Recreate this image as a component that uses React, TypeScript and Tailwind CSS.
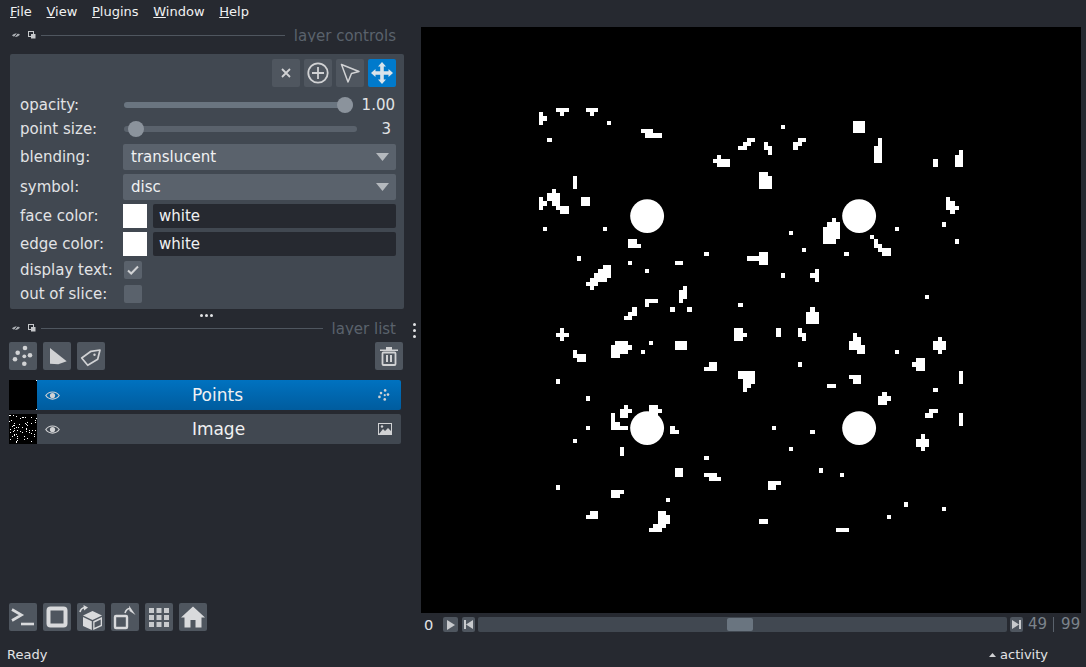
import React from 'react';

// white pixel runs of the binary image: [col, row, width, height]
const blobs: number[][] = [
  [0,1,1,3],[1,2,1,1],[4,0,3,1],[5,1,1,1],[11,0,3,1],[12,1,1,1],[16,3,1,1],[2,7,1,1],
  [24,5,3,1],[25,6,4,1],[49,7,2,1],[48,8,2,1],[47,9,2,1],[42,11,1,1],[41,12,4,1],[42,13,3,1],
  [8,16,1,3],[0,21,1,3],[1,22,1,1],[3,19,1,1],[2,20,3,2],[3,22,2,1],[4,23,3,1],[5,24,2,1],
  [10,21,2,2],[1,28,1,1],[15,28,1,1],[21,31,2,2],[23,32,1,1],[9,35,1,1],[21,36,1,1],[25,38,1,1],
  [32,36,2,1],[39,34,1,1],[49,35,3,1],[52,34,2,3],[15,37,2,1],[14,38,3,1],[13,39,4,1],[12,40,4,1],
  [11,41,3,1],[12,42,1,1],[33,43,1,3],[34,42,1,3],[25,45,3,1],[25,46,1,1],[31,47,1,1],[35,47,1,1],
  [47,46,1,1],[22,47,1,2],[21,48,1,1],[20,49,2,1],
  [57,4,1,1],[74,3,3,3],[53,8,1,2],[54,9,1,2],[61,7,2,1],[60,8,2,1],[60,9,1,1],[80,7,1,2],[79,9,2,4],
  [93,12,1,2],[99,10,1,1],[98,11,2,3],[52,15,2,1],[52,16,3,3],[96,21,1,3],[97,22,1,3],[98,23,1,1],
  [95,27,1,1],[98,31,1,1],[84,28,1,1],[59,29,1,1],[69,26,1,1],[68,27,3,1],[67,28,4,3],[67,31,3,1],
  [78,30,1,1],[79,31,1,2],[80,32,1,2],[81,33,2,2],[62,33,1,1],[72,34,1,1],[57,39,1,1],[65,38,1,3],
  [64,39,1,1],[91,44,1,1],[64,47,1,1],[63,48,3,3],
  [5,52,1,3],[4,53,3,1],[46,52,2,3],[48,53,1,1],[18,55,3,1],[17,56,5,1],[17,57,4,1],[17,58,2,1],
  [26,55,1,1],[24,57,1,1],[32,55,3,2],[8,57,1,2],[9,58,2,2],[40,60,2,1],[39,61,3,1],[47,62,4,2],
  [48,64,3,1],[48,65,2,1],[48,66,1,1],[4,64,1,1],[11,68,1,1],[20,70,1,1],[19,71,3,1],[19,72,2,1],
  [26,70,2,1],[26,71,3,1],[26,72,2,2],[17,72,1,3],[18,74,1,2],[19,75,2,1],[17,75,2,1],[11,75,1,1],[8,78,1,1],
  [31,75,1,2],[32,76,1,1],[19,80,1,2],[39,82,1,1],[32,85,2,2],[39,86,3,1],[40,87,3,1],[4,89,1,1],
  [17,90,3,1],[17,91,2,1],[30,92,1,1],[12,95,2,1],[11,96,3,1],[28,95,2,1],[28,96,3,2],[27,98,3,1],[26,99,3,1],
  [56,52,1,2],[61,52,1,2],[62,53,1,2],[74,53,1,1],[74,54,2,1],[73,55,3,1],[73,56,4,1],[75,57,2,1],
  [94,54,1,1],[93,55,3,2],[94,57,1,1],[84,57,1,1],[89,59,2,3],[88,60,1,1],[61,60,1,1],[99,62,1,3],
  [73,63,3,1],[74,64,2,1],[68,65,2,1],[93,66,1,1],[81,67,1,1],[80,68,3,1],[80,69,2,1],[92,71,2,1],
  [91,72,2,1],[99,72,1,3],[90,77,1,1],[89,78,3,2],[90,80,1,1],[55,75,1,1],[64,76,1,1],[59,80,1,1],
  [66,85,1,1],[71,86,1,1],[54,88,3,1],[54,89,2,1],[86,93,1,1],[95,94,1,1],[82,96,1,1],[52,97,2,1],[70,99,3,1],
];

function IconButton({ active, children }: { active?: boolean; children: React.ReactNode }) {
  return (
    <div className={`w-7 h-7 rounded-[2px] flex items-center justify-center shrink-0 ${active ? 'bg-[#007acc]' : 'bg-[#4f565f]'}`}>
      {children}
    </div>
  );
}

function DockHeader({ title, lineWidth }: { title: string; lineWidth: string }) {
  return (
    <div className="flex items-center h-4 pl-[11px] pr-[25px]">
      <svg width="10" height="8" viewBox="0 0 10 8" className="shrink-0 mr-[7px]">
        <path d="M1 4.500C3 2 7 2 9 3.500 7 6.500 3 6.500 1 4.500Z" fill="#a8acb1" />
        <path d="M3 6.500L7 1.500" stroke="#262930" strokeWidth="1" />
      </svg>
      <svg width="8" height="8" viewBox="0 0 8 8" className="shrink-0 mr-[5px]">
        <rect x="0.500" y="0.500" width="5" height="5" fill="none" stroke="#c5c7ca" />
        <rect x="3" y="3" width="4.500" height="4.500" fill="#c5c7ca" />
      </svg>
      <div className={`h-px bg-[#4f565f] ${lineWidth}`} />
      <span className="ml-auto self-start text-[15px] leading-[17px] h-[15px] pt-px overflow-hidden text-[#5a626c]">{title}</span>
    </div>
  );
}

function Combo({ value }: { value: string }) {
  return (
    <div className="flex-1 h-[26px] rounded-[2px] bg-[#5a626c] flex items-center pl-2 pr-[7px] justify-between">
      <span className="text-[15px] text-[#f0f1f2]">{value}</span>
      <svg width="13" height="8" viewBox="0 0 13 8"><path d="M0 0H13L6.500 8Z" fill="#b4b8bd" /></svg>
    </div>
  );
}

function ColorRow({ label }: { label: string }) {
  return (
    <div className="flex items-center h-6 mt-1 -mr-[2px]">
      <span className="w-[103px] text-[15px] text-[#e2e3e5]">{label}</span>
      <div className="w-6 h-6 bg-white shrink-0" />
      <div className="ml-[6px] flex-1 h-6 rounded-[2px] bg-[#262930] pl-[6px] flex items-center text-[15px] text-[#f0f1f2]">white</div>
    </div>
  );
}

function Eye() {
  return (
    <svg width="15" height="11" viewBox="0 0 15 11">
      <path d="M0.800 5.500C4 0.800 11 0.800 14.200 5.500 11 10.200 4 10.200 0.800 5.500Z" fill="none" stroke="#d1d2d4" strokeWidth="1.200" />
      <circle cx="7.500" cy="5.500" r="2.600" fill="#d1d2d4" />
    </svg>
  );
}

function PointsGlyph({ size }: { size: number }) {
  return (
    <svg width={size} height={size} viewBox="0 0 28 28">
      {[[16, 6, 2.300], [8.700, 10.700, 2.300], [21, 13.300, 2.300], [15.300, 14.300, 1.900], [6, 17.300, 2.300], [15.300, 21.700, 2.300]].map(([cx, cy, r]) => (
        <circle key={`${cx}-${cy}`} cx={cx} cy={cy} r={r} fill="#d1d2d4" />
      ))}
    </svg>
  );
}

function LayerRow({ name, selected, thumb, icon, className }: { name: string; selected?: boolean; thumb: React.ReactNode; icon: React.ReactNode; className?: string }) {
  return (
    <div className={`flex h-[30px] mx-[9px] w-[392px] ${className ?? ''}`}>
      <div className="w-7 h-[30px] bg-black shrink-0">{thumb}</div>
      <div className={`flex-1 flex items-center pl-2 pr-[9px] rounded-r-[2px] ${selected ? 'bg-linear-to-b from-[#0072c0] to-[#005c9e]' : 'bg-[#414851]'}`}>
        <Eye />
        <span className="flex-1 text-center text-[17px] text-[#f0f1f2] pr-px pt-[2px]">{name}</span>
        {icon}
      </div>
    </div>
  );
}

function StepIcon({ flip }: { flip?: boolean }) {
  return (
    <svg width="9" height="9" viewBox="0 0 9 9" className={flip ? '-scale-x-100' : ''}>
      <path d="M0 0H2V9H0ZM9 0V9L2 4.500Z" fill="#c8cacd" />
    </svg>
  );
}

export default function App() {
  return (
    <div className="w-[1086px] h-[667px] flex flex-col bg-[#262930] text-[#f0f1f2] overflow-hidden font-['DejaVu_Sans',sans-serif]">
      {/* Menu bar */}
      <div className="h-[24px] flex items-center pl-[10px] gap-[14.7px] text-[13px] shrink-0">
        <span><span className="underline">F</span>ile</span>
        <span><span className="underline">V</span>iew</span>
        <span><span className="underline">P</span>lugins</span>
        <span><span className="underline">W</span>indow</span>
        <span><span className="underline">H</span>elp</span>
      </div>

      <div className="flex flex-1 min-h-0">
        {/* Left docks */}
        <div className="w-[421px] shrink-0 flex flex-col pt-[3px]">
          <div className="h-[27px] shrink-0">
            <DockHeader title="layer controls" lineWidth="w-[244px]" />
          </div>

          {/* Layer controls */}
          <div className="mx-[10px] w-[394px] h-[255px] rounded-[2px] bg-[#414851] px-[10px] pt-[5px] flex flex-col shrink-0">
            <div className="flex justify-end gap-1 -mr-[2px]">
              <IconButton>
                <svg width="10" height="10" viewBox="0 0 10 10"><path d="M1 1L9 9M9 1L1 9" stroke="#d1d2d4" strokeWidth="1.800" /></svg>
              </IconButton>
              <IconButton>
                <svg width="24" height="24" viewBox="0 0 24 24"><circle cx="12" cy="12" r="9.700" fill="none" stroke="#d1d2d4" strokeWidth="1.800" /><path d="M12 6V18M6 12H18" stroke="#d1d2d4" strokeWidth="1.800" /></svg>
              </IconButton>
              <IconButton>
                <svg width="22" height="22" viewBox="0 0 22 22"><path d="M2.500 2.500L20 9.500 12.500 11.500 9 20Z" fill="none" stroke="#d1d2d4" strokeWidth="1.500" strokeLinejoin="round" /></svg>
              </IconButton>
              <IconButton active>
                <svg width="24" height="24" viewBox="0 0 24 24"><path d="M12 1L16 5.500H13.800V10.200H18.500V8L23 12 18.500 16V13.800H13.800V18.500H16L12 23 8 18.500H10.200V13.800H5.500V16L1 12 5.500 8V10.200H10.200V5.500H8Z" fill="#d9e3ea" /></svg>
              </IconButton>
            </div>

            <div className="flex items-center h-6 mt-[6px]">
              <span className="w-[104px] text-[15px] text-[#e2e3e5] pt-px">opacity:</span>
              <div className="relative w-[229px] h-[6px] rounded-[3px] bg-[#6a7580]">
                <div className="absolute -top-[5px] left-[213px] w-4 h-4 rounded-full bg-[#8b939c]" />
              </div>
              <span className="flex-1 text-right text-[15px] text-[#e2e3e5] -mr-px pt-px">1.00</span>
            </div>
            <div className="flex items-center h-6">
              <span className="w-[104px] text-[15px] text-[#e2e3e5]">point size:</span>
              <div className="relative w-[233px] h-[6px] rounded-[3px] bg-[#5a626c]">
                <div className="absolute -top-[5px] left-[4px] w-4 h-4 rounded-full bg-[#8b939c]" />
              </div>
              <span className="flex-1 text-right text-[15px] text-[#e2e3e5] pr-[3px]">3</span>
            </div>

            <div className="flex items-center mt-[3px] -mr-[2px]">
              <span className="w-[103px] text-[15px] text-[#e2e3e5]">blending:</span>
              <Combo value="translucent" />
            </div>
            <div className="flex items-center mt-1 -mr-[2px]">
              <span className="w-[103px] text-[15px] text-[#e2e3e5]">symbol:</span>
              <Combo value="disc" />
            </div>
            <ColorRow label="face color:" />
            <ColorRow label="edge color:" />
            <div className="flex items-center h-[18px] mt-[5px]">
              <span className="w-[104px] text-[15px] text-[#e2e3e5]">display text:</span>
              <div className="w-[18px] h-[18px] rounded-[2px] bg-[#5a626c] flex items-center justify-center">
                <svg width="12" height="10" viewBox="0 0 12 10"><path d="M1 5.500L4.200 8.500 11 1.500" fill="none" stroke="#d1d2d4" strokeWidth="2" /></svg>
              </div>
            </div>
            <div className="flex items-center h-[18px] mt-[6px]">
              <span className="w-[104px] text-[15px] text-[#e2e3e5]">out of slice:</span>
              <div className="w-[18px] h-[18px] rounded-[2px] bg-[#5a626c]" />
            </div>
          </div>

          {/* Splitter handle */}
          <div className="h-[11px] flex items-center justify-center gap-[2px] pr-[9px] pt-px shrink-0">
            <span className="w-[3px] h-[3px] bg-[#e2e3e5] rounded-full" />
            <span className="w-[3px] h-[3px] bg-[#e2e3e5] rounded-full" />
            <span className="w-[3px] h-[3px] bg-[#e2e3e5] rounded-full" />
          </div>

          {/* Layer list */}
          <div className="relative h-[16px] shrink-0">
            <DockHeader title="layer list" lineWidth="w-[282px]" />
            <div className="absolute right-[5px] top-[3px] flex flex-col gap-[3px]">
              <span className="w-[3px] h-[3px] bg-[#e2e3e5] rounded-full" />
              <span className="w-[3px] h-[3px] bg-[#e2e3e5] rounded-full" />
              <span className="w-[3px] h-[3px] bg-[#e2e3e5] rounded-full" />
            </div>
          </div>

          <div className="flex gap-[6px] px-[9px] w-[412px] mt-[6px] shrink-0">
            <IconButton><PointsGlyph size={28} /></IconButton>
            <IconButton>
              <svg width="28" height="28" viewBox="0 0 28 28"><path d="M7 6L23.700 19.300 15.300 22.300 7 21.700Z" fill="#d1d2d4" /></svg>
            </IconButton>
            <IconButton>
              <svg width="28" height="28" viewBox="0 0 28 28"><path d="M4.700 16L14 9.300 23 8 20.700 17.300 10.700 23.300Z" fill="none" stroke="#d1d2d4" strokeWidth="1.700" strokeLinejoin="round" /><circle cx="17.500" cy="12.700" r="1.200" fill="#d1d2d4" /></svg>
            </IconButton>
            <div className="ml-auto">
              <IconButton>
                <svg width="20" height="20" viewBox="0 0 20 20"><path d="M1 3.500H19V5H1ZM7 1H13V3.500H7Z" fill="#d1d2d4" /><rect x="3.500" y="6.500" width="13" height="12.500" rx="1" fill="none" stroke="#d1d2d4" strokeWidth="1.800" /><path d="M7 9H9V16H7ZM11 9H13V16H11Z" fill="#d1d2d4" /></svg>
              </IconButton>
            </div>
          </div>

          <LayerRow
            name="Points"
            selected
            className="mt-[10px]"
            thumb={<div className="w-7 h-[30px] flex flex-col justify-between items-end"><div className="w-px h-px bg-white" /><div className="w-px h-px bg-white" /></div>}
            icon={<PointsGlyph size={16} />}
          />
          <LayerRow
            name="Image"
            className="mt-1"
            thumb={
              <svg width="28" height="28" viewBox="0 0 28 28" shapeRendering="crispEdges" className="mt-px">
                {blobs.filter((_, i) => i % 3 === 0).map(([x, y], i) => (
                  <rect key={i} x={Math.floor(x * 0.28)} y={Math.floor(y * 0.28)} width="1" height="1" fill="#fff" />
                ))}
              </svg>
            }
            icon={
              <svg width="14" height="12" viewBox="0 0 14 12">
                <rect x="0.500" y="0.500" width="13" height="11" fill="none" stroke="#d1d2d4" />
                <path d="M1 11L5 6 7 8 10 5 13 8V11Z" fill="#d1d2d4" />
                <circle cx="4" cy="3.500" r="1.200" fill="#d1d2d4" />
              </svg>
            }
          />

          {/* Viewer buttons */}
          <div className="flex gap-[6px] px-[9px] mt-auto mb-[11px] shrink-0">
            <IconButton>
              <svg width="24" height="20" viewBox="0 0 24 20"><path d="M1 2.500L10.500 8 1 13.500" fill="none" stroke="#d9dadc" strokeWidth="2.600" /><path d="M10 17H23" stroke="#d9dadc" strokeWidth="2.600" /></svg>
            </IconButton>
            <IconButton>
              <svg width="22" height="22" viewBox="0 0 22 22"><rect x="2.500" y="2.500" width="17" height="17" rx="2" fill="none" stroke="#d9dadc" strokeWidth="4" /></svg>
            </IconButton>
            <IconButton>
              <svg width="28" height="28" viewBox="0 0 28 28">
                <path d="M15.500 8L25 12.500 15.500 17 6 12.500Z" fill="#d9dadc" />
                <path d="M6 14L14.800 18.300V27L6 23Z" fill="#d9dadc" />
                <path d="M16.200 18.300L25 14V23L16.200 27ZM17.500 19.500V24.800L23.700 22V16.500Z" fill="#d9dadc" fillRule="evenodd" />
                <path d="M3 9C3.500 6.500 5 5 7.500 4.500" fill="none" stroke="#d9dadc" strokeWidth="1.600" />
                <path d="M6.500 2L11 4.500 7 7.500Z" fill="#d9dadc" />
              </svg>
            </IconButton>
            <IconButton>
              <svg width="28" height="28" viewBox="0 0 28 28">
                <rect x="4" y="13" width="12" height="12" rx="1" fill="none" stroke="#d9dadc" strokeWidth="2.400" />
                <path d="M14 10C15 7 17 5.500 19 5.500" fill="none" stroke="#d9dadc" strokeWidth="1.600" />
                <path d="M18 2.500L24.500 12 18.500 8Z" fill="#d9dadc" />
              </svg>
            </IconButton>
            <IconButton>
              <svg width="22" height="21" viewBox="0 0 22 21">
                <path d="M1 1H6V6H1ZM8.500 1H13.500V6H8.500ZM16 1H21V6H16ZM1 8H6V13H1ZM8.500 8H13.500V13H8.500ZM16 8H21V13H16ZM1 15H6V20H1ZM8.500 15H13.500V20H8.500ZM16 15H21V20H16Z" fill="#c8cacd" />
              </svg>
            </IconButton>
            <IconButton>
              <svg width="24" height="22" viewBox="0 0 24 22"><path d="M12 0.500L24 11.500H20.500V21.500H14.500V14H9.500V21.500H3.500V11.500H0Z" fill="#d9dadc" /></svg>
            </IconButton>
          </div>
        </div>

        {/* Canvas and dims slider */}
        <div className="flex-1 flex flex-col pt-[3px] pr-[5px] min-w-0">
          <div className="h-[586px] bg-black flex items-center justify-center shrink-0">
            <svg width="424" height="424" viewBox="0 0 100 100" className="overflow-visible">
              <g shapeRendering="crispEdges" fill="#fff">
                {blobs.map(([x, y, w, h], i) => (
                  <rect key={i} x={x} y={y} width={w} height={h} />
                ))}
              </g>
              {[[25.5, 25.5], [75.5, 25.5], [25.5, 75.5], [75.5, 75.5]].map(([cx, cy]) => (
                <circle key={`${cx}-${cy}`} cx={cx} cy={cy} r="4" fill="#fff" />
              ))}
            </svg>
          </div>
          <div className="flex items-center h-[15px] mt-1 shrink-0">
            <span className="w-[22px] pl-[3px] text-[14.67px] text-[#e2e3e5]">0</span>
            <div className="w-[15px] h-[15px] rounded-[2px] bg-[#4f565f] flex items-center justify-center">
              <svg width="8" height="10" viewBox="0 0 8 10"><path d="M0 0L8 5 0 10Z" fill="#c8cacd" /></svg>
            </div>
            <div className="w-[13px] h-[15px] ml-1 rounded-[2px] bg-[#4f565f] flex items-center justify-center"><StepIcon /></div>
            <div className="relative w-[529px] h-[15px] ml-[3px] rounded-[2px] bg-[#414851]">
              <div className="absolute left-[249px] top-px w-[26px] h-[13px] rounded-[2px] bg-[#6a7580]" />
            </div>
            <div className="w-[13px] h-[15px] ml-[3px] rounded-[2px] bg-[#4f565f] flex items-center justify-center"><StepIcon flip /></div>
            <span className="ml-[5px] text-[15px] text-[#7c838b]">49</span>
            <span className="w-px h-[15px] bg-[#5a626c] ml-[6px]" />
            <span className="ml-[7px] text-[15px] text-[#7c838b]">99</span>
          </div>
        </div>
      </div>

      {/* Status bar */}
      <div className="h-[25px] flex items-center pl-[7px] pr-[38px] justify-between text-[13px] text-[#e2e3e5] shrink-0">
        <span>Ready</span>
        <span className="flex items-center gap-[4px]">
          <svg width="7" height="4" viewBox="0 0 7 4"><path d="M3.500 0L7 4H0Z" fill="#d1d2d4" /></svg>
          activity
        </span>
      </div>
    </div>
  );
}
